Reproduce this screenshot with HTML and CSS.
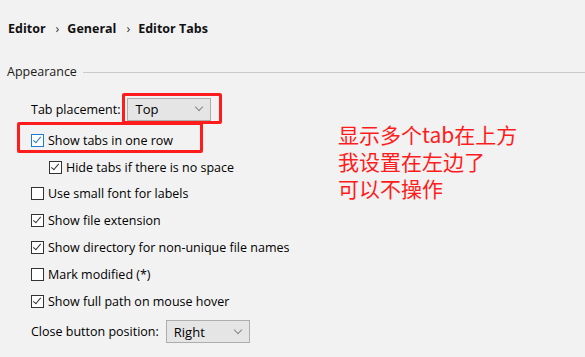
FILE: index.html
```html
<!DOCTYPE html>
<html lang="en">
<head>
    <meta charset="UTF-8">
    <title>Editor Tabs</title>
    <link rel="stylesheet" href="styles.css">
</head>
<body>
    <div class="breadcrumb">
        <span>Editor</span><span class="sep">›</span><span>General</span><span class="sep">›</span><span>Editor Tabs</span>
    </div>

    <div class="group-title">Appearance</div>

    <div class="options">
        <div class="row field first">
            <span class="label">Tab placement:</span>
            <div class="combo mark-box combo-top"><span>Top</span><span class="arrow"></span></div>
        </div>

        <div class="row marked">
            <span class="check checked focused"></span>Show tabs in one row
        </div>
        <div class="row sub">
            <span class="check checked"></span>Hide tabs if there is no space
        </div>
        <div class="row">
            <span class="check"></span>Use small font for labels
        </div>
        <div class="row">
            <span class="check checked"></span>Show file extension
        </div>
        <div class="row">
            <span class="check checked"></span>Show directory for non-unique file names
        </div>
        <div class="row">
            <span class="check"></span>Mark modified (*)
        </div>
        <div class="row">
            <span class="check checked"></span>Show full path on mouse hover
        </div>

        <div class="row field last">
            <span class="label">Close button position:</span>
            <div class="combo combo-close"><span>Right</span><span class="arrow"></span></div>
        </div>
    </div>

    <!-- annotation written over the screenshot -->
    <div class="note">
        <div class="note-line">显示多个tab在上方</div>
        <div class="note-line">我设置在左边了</div>
        <div class="note-line">可以不操作</div>
    </div>
</body>
</html>
```

FILE: styles.css
```css
body {
    margin: 0;
    background-color: #f2f2f2;
    font-family: "Open Sans", "Noto Sans", sans-serif;
    font-size: 12.5px;
    color: #000;
    position: relative;
    height: 357px;
    overflow: hidden;
}

.breadcrumb {
    padding: 20px 0 0 8px;
    font-size: 12.5px;
    font-weight: bold;
    line-height: 18px;
    color: #111;
}

.breadcrumb .sep {
    font-weight: normal;
    color: #333;
    padding: 0 8px 0 10px;
}

.group-title {
    display: flex;
    align-items: center;
    margin: 25px 0 0 7px;
    line-height: 18px;
    color: #1a1a1a;
}

.group-title::after {
    content: "";
    flex: 1;
    height: 1px;
    margin-left: 6px;
    background-color: #cacaca;
}

.options {
    padding-left: 31px;
    margin-top: 13px;
}

.row {
    display: flex;
    align-items: center;
    height: 26.8px;
    position: relative;
}

.row.sub {
    padding-left: 18px;
}

.row.field {
    height: 30px;
}

.row.first {
    margin-bottom: 3px;
}

.row.last {
    margin-top: 2px;
}

.check {
    width: 11px;
    height: 11px;
    border: 1px solid #333;
    background-color: #fff;
    margin-right: 4px;
    position: relative;
}

.check.focused {
    border-color: #1e7bd6;
}

.check.checked::after {
    content: "";
    position: absolute;
    left: 3px;
    top: 0px;
    width: 3px;
    height: 7px;
    border-right: 1px solid #333;
    border-bottom: 1px solid #333;
    transform: rotate(40deg);
}

.check.focused::after {
    border-color: #1e7bd6;
}

.label {
    margin-right: 7px;
}

.combo {
    display: flex;
    align-items: center;
    justify-content: space-between;
    box-sizing: border-box;
    height: 23px;
    padding: 0 8px 0 7px;
    border: 1px solid #adadad;
    background-color: #e5e5e5;
    font-size: 13px;
    position: relative;
}

.combo-top {
    width: 84px;
}

.combo-close {
    width: 84px;
}

.arrow {
    width: 5px;
    height: 5px;
    border-right: 1px solid #888;
    border-bottom: 1px solid #888;
    transform: rotate(45deg);
    margin-top: -4px;
}

/* red annotation boxes */
.mark-box::before {
    content: "";
    position: absolute;
    left: -6px;
    top: -6px;
    right: -12px;
    bottom: -4px;
    border: 3px solid #ff1c1c;
    border-radius: 2px;
}

.marked::before {
    content: "";
    position: absolute;
    left: -14px;
    top: -5px;
    width: 180px;
    height: 25px;
    border: 3px solid #ff1c1c;
    border-radius: 2px;
}

.note {
    position: absolute;
    left: 338px;
    top: 121px;
    font-family: "Noto Sans CJK SC", sans-serif;
    font-size: 21px;
    color: #ff1c1c;
}

.note-line {
    height: 27px;
    line-height: 27px;
}
```
